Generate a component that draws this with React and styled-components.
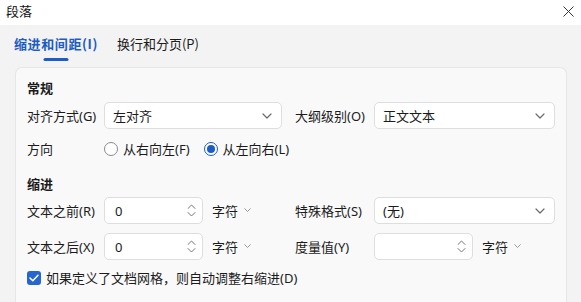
import React from "react";
import styled, { createGlobalStyle } from "styled-components";

const Global = createGlobalStyle`
  html, body { margin: 0; padding: 0; background: #f3f3f3; }
  body {
    font-family: "Noto Sans", "Noto Sans CJK SC", sans-serif;
    font-size: 13px;
    color: #1b1b1b;
    width: 581px;
    height: 302px;
    overflow: hidden;
  }
`;

const Dialog = styled.div`
  width: 581px;
  height: 302px;
  background: #f3f3f3;
  display: flex;
  flex-direction: column;
  overflow: hidden;
`;

const TitleBar = styled.div`
  height: 25px;
  background: #ffffff;
  display: flex;
  align-items: center;
  justify-content: space-between;
  padding: 0 7px 0 6px;
  flex-shrink: 0;
`;

const Title = styled.span`
  font-size: 13px;
  line-height: 25px;
  color: #111;
  padding-bottom: 2px;
`;

const CloseBtn = styled.button`
  border: none;
  background: transparent;
  padding: 0;
  width: 12px;
  height: 12px;
  display: flex;
  align-items: center;
  justify-content: center;
  margin-top: -3px;
`;

const Tabs = styled.div`
  height: 42px;
  display: flex;
  align-items: flex-start;
  gap: 19px;
  padding: 9px 0 0 14px;
  box-sizing: border-box;
  flex-shrink: 0;
`;

const Tab = styled.div`
  position: relative;
  font-family: "Noto Sans CJK SC", "Noto Sans", sans-serif;
  font-size: 13px;
  line-height: 20px;
  font-weight: ${(p) => (p.$active ? 700 : 400)};
  color: ${(p) => (p.$active ? "#1c5cc4" : "#1b1b1b")};
  letter-spacing: ${(p) => (p.$active ? "0.6px" : "0")};
  &::after {
    content: "";
    display: ${(p) => (p.$active ? "block" : "none")};
    position: absolute;
    left: 50%;
    transform: translateX(-50%);
    top: 24px;
    width: 25px;
    height: 3px;
    border-radius: 2px;
    background: #1c5cc4;
  }
`;

const Panel = styled.div`
  margin: 0 14px 0 15px;
  flex: 1;
  background: #f9f9f9;
  border: 1px solid #e6e6e6;
  border-bottom: none;
  border-radius: 7px 7px 0 0;
  padding: 10px 11px 0 11px;
  display: flex;
  flex-direction: column;
`;

const SectionTitle = styled.div`
  font-weight: 700;
  font-size: 13px;
  line-height: 20px;
  margin-top: ${(p) => p.$mt || 0}px;
  margin-bottom: ${(p) => p.$mb || 0}px;
`;

const Row = styled.div`
  display: flex;
  align-items: center;
  height: 27px;
  gap: 13px;
  margin-top: ${(p) => p.$mt || 0}px;
`;

const Field = styled.div`
  display: flex;
  align-items: center;
  width: ${(p) => p.$w}px;
  flex-shrink: 0;
  white-space: nowrap;
`;

const Label = styled.label`
  width: ${(p) => p.$w}px;
  flex-shrink: 0;
  line-height: 20px;
  white-space: nowrap;
`;

const SelectBox = styled.div`
  width: ${(p) => p.$w}px;
  height: 27px;
  box-sizing: border-box;
  background: #fff;
  border: 1px solid #dedede;
  border-radius: 5px;
  display: flex;
  align-items: center;
  justify-content: space-between;
  padding: 0 9px 0 8px;
`;

const SpinBox = styled(SelectBox)`
  padding: 0 6px 0 10px;
`;

const Spin = styled.div`
  display: flex;
  flex-direction: column;
  gap: 3px;
  align-items: center;
`;

const Unit = styled.div`
  display: flex;
  align-items: center;
  gap: 6px;
  margin-left: ${(p) => p.$ml || 9}px;
  line-height: 20px;
`;

const RadioGroup = styled.div`
  display: flex;
  align-items: center;
  gap: 14px;
  white-space: nowrap;
`;

const RadioItem = styled.label`
  display: flex;
  align-items: center;
  gap: 5px;
  line-height: 20px;
  white-space: nowrap;
  flex-shrink: 0;
`;

const RadioCircle = styled.span`
  width: 14px;
  height: 14px;
  flex-shrink: 0;
  box-sizing: border-box;
  border-radius: 50%;
  background: #fff;
  border: 1px solid ${(p) => (p.$checked ? "#1c5cc4" : "#8a8a8a")};
  display: flex;
  align-items: center;
  justify-content: center;
  &::after {
    content: "";
    display: ${(p) => (p.$checked ? "block" : "none")};
    width: 8px;
    height: 8px;
    border-radius: 50%;
    background: #1c5cc4;
  }
`;

const CheckRow = styled.label`
  display: flex;
  align-items: center;
  gap: 5px;
  height: 26px;
  margin-top: 5px;
  line-height: 20px;
`;

const CheckBox = styled.span`
  width: 14px;
  height: 14px;
  border-radius: 3px;
  background: #2465cf;
  display: flex;
  align-items: center;
  justify-content: center;
`;

const Chevron = ({ size = 10, color = "#6b6b6b" }) => (
  <svg width={size} height={size * 0.6} viewBox="0 0 10 6" fill="none">
    <path d="M1 1l4 4 4-4" stroke={color} strokeWidth="1.2" strokeLinecap="round" strokeLinejoin="round" />
  </svg>
);

const Arrow = ({ up }) => (
  <svg width="9" height="5" viewBox="0 0 9 5" fill="none">
    <path d={up ? "M1 4.5l3.5-3.5 3.5 3.5" : "M1 0.5l3.5 3.5 3.5-3.5"} stroke="#777" strokeWidth="1" strokeLinecap="round" strokeLinejoin="round" />
  </svg>
);

const Select = ({ w, value }) => (
  <SelectBox $w={w}>
    <span>{value}</span>
    <Chevron />
  </SelectBox>
);

const Spinner = ({ w, value }) => (
  <SpinBox $w={w}>
    <span>{value}</span>
    <Spin>
      <Arrow up />
      <Arrow />
    </Spin>
  </SpinBox>
);

const UnitSel = ({ ml }) => (
  <Unit $ml={ml}>
    <span>字符</span>
    <Chevron size={7} color="#888" />
  </Unit>
);

export default function App() {
  return (
    <>
      <Global />
      <Dialog>
        <TitleBar>
          <Title>段落</Title>
          <CloseBtn aria-label="close">
            <svg width="11" height="11" viewBox="0 0 11 11">
              <path d="M0.5 0.5l10 10M10.5 0.5l-10 10" stroke="#333" strokeWidth="1" />
            </svg>
          </CloseBtn>
        </TitleBar>
        <Tabs>
          <Tab $active>缩进和间距(I)</Tab>
          <Tab>换行和分页(P)</Tab>
        </Tabs>
        <Panel>
          <SectionTitle $mb={4}>常规</SectionTitle>
          <Row>
            <Field $w={255}>
              <Label $w={77}>对齐方式(G)</Label>
              <Select w={178} value="左对齐" />
            </Field>
            <Field $w={260}>
              <Label $w={79}>大纲级别(O)</Label>
              <Select w={181} value="正文文本" />
            </Field>
          </Row>
          <Row $mt={6}>
            <Field $w={300}>
              <Label $w={77}>方向</Label>
              <RadioGroup>
                <RadioItem>
                  <RadioCircle />
                  从右向左(F)
                </RadioItem>
                <RadioItem>
                  <RadioCircle $checked />
                  从左向右(L)
                </RadioItem>
              </RadioGroup>
            </Field>
          </Row>
          <SectionTitle $mt={12} $mb={3}>缩进</SectionTitle>
          <Row>
            <Field $w={255}>
              <Label $w={77}>文本之前(R)</Label>
              <Spinner w={99} value="0" />
              <UnitSel />
            </Field>
            <Field $w={260}>
              <Label $w={79}>特殊格式(S)</Label>
              <Select w={181} value="(无)" />
            </Field>
          </Row>
          <Row $mt={9}>
            <Field $w={255}>
              <Label $w={77}>文本之后(X)</Label>
              <Spinner w={99} value="0" />
              <UnitSel />
            </Field>
            <Field $w={260}>
              <Label $w={79}>度量值(Y)</Label>
              <Spinner w={99} value="" />
              <UnitSel />
            </Field>
          </Row>
          <CheckRow>
            <CheckBox>
              <svg width="10" height="8" viewBox="0 0 10 8" fill="none">
                <path d="M1 4l2.8 2.8L9 1.2" stroke="#fff" strokeWidth="1.5" strokeLinecap="round" strokeLinejoin="round" />
              </svg>
            </CheckBox>
            如果定义了文档网格，则自动调整右缩进(D)
          </CheckRow>
        </Panel>
      </Dialog>
    </>
  );
}
